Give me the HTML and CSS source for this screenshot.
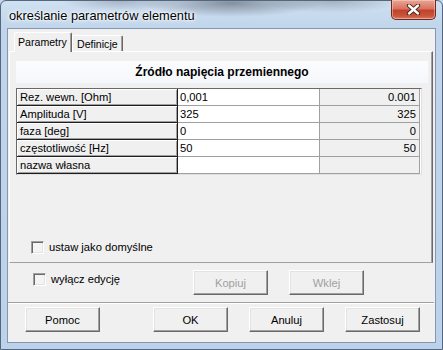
FILE: index.html
```html
<!DOCTYPE html>
<html lang="pl">
<head>
<meta charset="utf-8">
<title>określanie parametrów elementu</title>
<link rel="stylesheet" href="styles.css">
</head>
<body>
<div class="window">
  <div class="titlebar">
    <span class="title">określanie parametrów elementu</span>
    <div class="close">
      <svg width="17" height="11" viewBox="0 0 17 11">
        <path d="M4 1.5 L13 9.5 M13 1.5 L4 9.5" stroke="#3a1a14" stroke-width="4.2" stroke-linecap="round"/>
        <path d="M4 1.5 L13 9.5 M13 1.5 L4 9.5" stroke="#ffffff" stroke-width="2.4" stroke-linecap="round"/>
      </svg>
    </div>
  </div>
  <div class="client">
    <div class="tabs">
      <div class="tab active">Parametry</div>
      <div class="tab">Definicje</div>
    </div>
    <div class="panel">
      <div class="heading">Źródło napięcia przemiennego</div>
      <div class="grid">
        <div class="cell label">Rez. wewn. [Ohm]</div>
        <div class="cell edit">0,001</div>
        <div class="cell value">0.001</div>
        <div class="cell label">Amplituda [V]</div>
        <div class="cell edit">325</div>
        <div class="cell value">325</div>
        <div class="cell label">faza [deg]</div>
        <div class="cell edit">0</div>
        <div class="cell value">0</div>
        <div class="cell label">częstotliwość [Hz]</div>
        <div class="cell edit">50</div>
        <div class="cell value">50</div>
        <div class="cell label">nazwa własna</div>
        <div class="cell edit"></div>
        <div class="cell value"></div>
      </div>
      <label class="check check-default"><span class="box"></span><span>ustaw jako domyślne</span></label>
    </div>
    <div class="row-edit">
      <label class="check check-edit"><span class="box"></span><span>wyłącz edycję</span></label>
      <button class="btn disabled">Kopiuj</button>
      <button class="btn disabled">Wklej</button>
    </div>
    <div class="separator"></div>
    <div class="row-buttons">
      <button class="btn">Pomoc</button>
      <button class="btn btn-ok">OK</button>
      <button class="btn">Anuluj</button>
      <button class="btn">Zastosuj</button>
    </div>
  </div>
</div>
</body>
</html>
```
FILE: styles.css
```css
html, body {
  margin: 0;
  padding: 0;
}
body {
  width: 443px;
  height: 350px;
  overflow: hidden;
  background: #c3d7ec;
  font-family: "Liberation Sans", Arial, sans-serif;
  font-size: 11.2px;
  color: #000;
}
.window {
  box-sizing: border-box;
  width: 443px;
  height: 350px;
  display: flex;
  flex-direction: column;
  border: 1px solid #55677c;
  border-radius: 6px 6px 0 0;
  background:
    radial-gradient(ellipse 90px 14px at 230px 2px, rgba(70,78,92,0.55), rgba(70,78,92,0) 100%),
    radial-gradient(ellipse 60px 10px at 120px 0px, rgba(90,100,115,0.35), rgba(90,100,115,0) 100%),
    radial-gradient(ellipse 70px 12px at 330px 0px, rgba(80,90,105,0.35), rgba(80,90,105,0) 100%),
    linear-gradient(180deg, #cfe0f1 0px, #c0d5eb 28px, #bcd2ea 100%);
}
.titlebar {
  height: 27px;
  display: flex;
  justify-content: space-between;
  align-items: flex-start;
  flex: none;
}
.title {
  margin: 7px 0 0 8px;
  font-size: 12.8px;
  color: #000;
  text-shadow: 0 0 6px #fff, 0 0 3px #fff, 0 0 2px #fff;
}
.close {
  width: 45px;
  height: 20px;
  margin: -1px 6px 0 0;
  box-sizing: border-box;
  border: 1px solid #6e2a20;
  border-top: none;
  border-radius: 0 0 5px 5px;
  background: linear-gradient(180deg, #e9a796 0%, #d9735f 45%, #c1432c 55%, #c9563d 85%, #dd8066 100%);
  box-shadow: inset 0 0 0 1px rgba(255,220,210,0.45);
  display: flex;
  align-items: center;
  justify-content: center;
}
.client {
  flex: none;
  box-sizing: border-box;
  width: 429px;
  height: 315px;
  margin: 0 0 0 6px;
  border: 1px solid #8497ad;
  background: #f0f0f0;
  display: flex;
  flex-direction: column;
}
.tabs {
  display: flex;
  align-items: flex-end;
  margin: 3px 0 0 6px;
  height: 19px;
  position: relative;
  z-index: 1;
  font-size: 10.6px;
}
.tab {
  box-sizing: border-box;
  height: 16px;
  padding: 1px 4px 0 4px;
  border: 1px solid #fff;
  border-right-color: #696969;
  border-bottom: none;
  box-shadow: inset -1px 0 #a0a0a0;
  background: #f0f0f0;
  line-height: 14px;
  border-radius: 2px 2px 0 0;
  white-space: nowrap;
}
.tab.active {
  height: 20px;
  margin-bottom: -1px;
  width: 58px;
  padding: 2px 0 0 3px;
  line-height: 14px;
}
.tab:not(.active) {
  width: 51px;
  padding-left: 4px;
}
.panel {
  box-sizing: border-box;
  margin: 0 0 0 1px;
  width: 424px;
  height: 212px;
  border: 1px solid #fff;
  border-right-color: #696969;
  border-bottom-color: #a0a0a0;
  box-shadow: inset -1px 0 #a0a0a0;
  display: flex;
  flex-direction: column;
}
.heading {
  box-sizing: border-box;
  margin: 9px 4px 0 6px;
  height: 22px;
  background: linear-gradient(180deg, #fbfcfe, #f4f7fb);
  font-weight: bold;
  font-size: 12px;
  text-align: center;
  line-height: 22px;
}
.grid {
  margin: 5px 0 0 6px;
  width: 406px;
  box-sizing: border-box;
  display: grid;
  grid-template-columns: 161px 142px 100px;
  grid-auto-rows: 17px;
  border-left: 1px solid #696969;
  border-top: 1px solid #696969;
  border-right: 1px solid #e0e0e0;
  border-bottom: 1px solid #e0e0e0;
  background: #fff;
}
.cell {
  box-sizing: border-box;
  padding: 0 3px;
  line-height: 16px;
  white-space: nowrap;
  overflow: hidden;
}
.cell.label {
  background: #f0f0f0;
  border-right: 1px solid #1e1e1e;
  border-bottom: 1px solid #1e1e1e;
  box-shadow: inset 1px 1px #fff, inset -1px -1px #a0a0a0;
  padding-left: 3px;
}
.cell.edit {
  background: #fff;
  border-right: 1px solid #a0a0a0;
  border-bottom: 1px solid #a0a0a0;
  padding-left: 2px;
}
.cell.value {
  background: #f0f0f0;
  border-right: 1px solid #a0a0a0;
  border-bottom: 1px solid #a0a0a0;
  text-align: right;
  padding-right: 3px;
}
.check {
  display: flex;
  align-items: center;
  gap: 5px;
  line-height: 13px;
}
.box {
  box-sizing: border-box;
  width: 13px;
  height: 13px;
  flex: none;
  border: 1px solid #a0a0a0;
  border-right-color: #fff;
  border-bottom-color: #fff;
  box-shadow: inset 1px 1px #696969, inset -1px -1px #e3e3e3;
  background: #f4f4f4;
}
.check-default {
  margin: 66px 0 0 21px;
}
.row-edit {
  height: 39px;
  box-sizing: border-box;
  padding: 7px 0 0 25px;
  display: flex;
  align-items: flex-start;
}
.check-edit {
  width: 160px;
  margin-top: 3px;
}
.row-edit .btn + .btn {
  margin-left: 21px;
}
.separator {
  height: 0;
  border-top: 1px solid #a0a0a0;
  border-bottom: 1px solid #fff;
  margin-right: 1px;
}
.row-buttons {
  display: flex;
  padding: 3px 0 0 17px;
  gap: 21px;
}
.row-buttons .btn-ok {
  margin-left: 32px;
}
.btn {
  box-sizing: border-box;
  width: 75px;
  height: 25px;
  padding: 0;
  font-family: "Liberation Sans", Arial, sans-serif;
  font-size: 11.2px;
  color: #000;
  background: #f0f0f0;
  border: 1px solid #fff;
  border-right-color: #696969;
  border-bottom-color: #696969;
  box-shadow: inset -1px -1px #a0a0a0, inset 1px 1px #e3e3e3;
  border-radius: 0;
}
.btn.disabled {
  color: #a0a0a0;
}
```
